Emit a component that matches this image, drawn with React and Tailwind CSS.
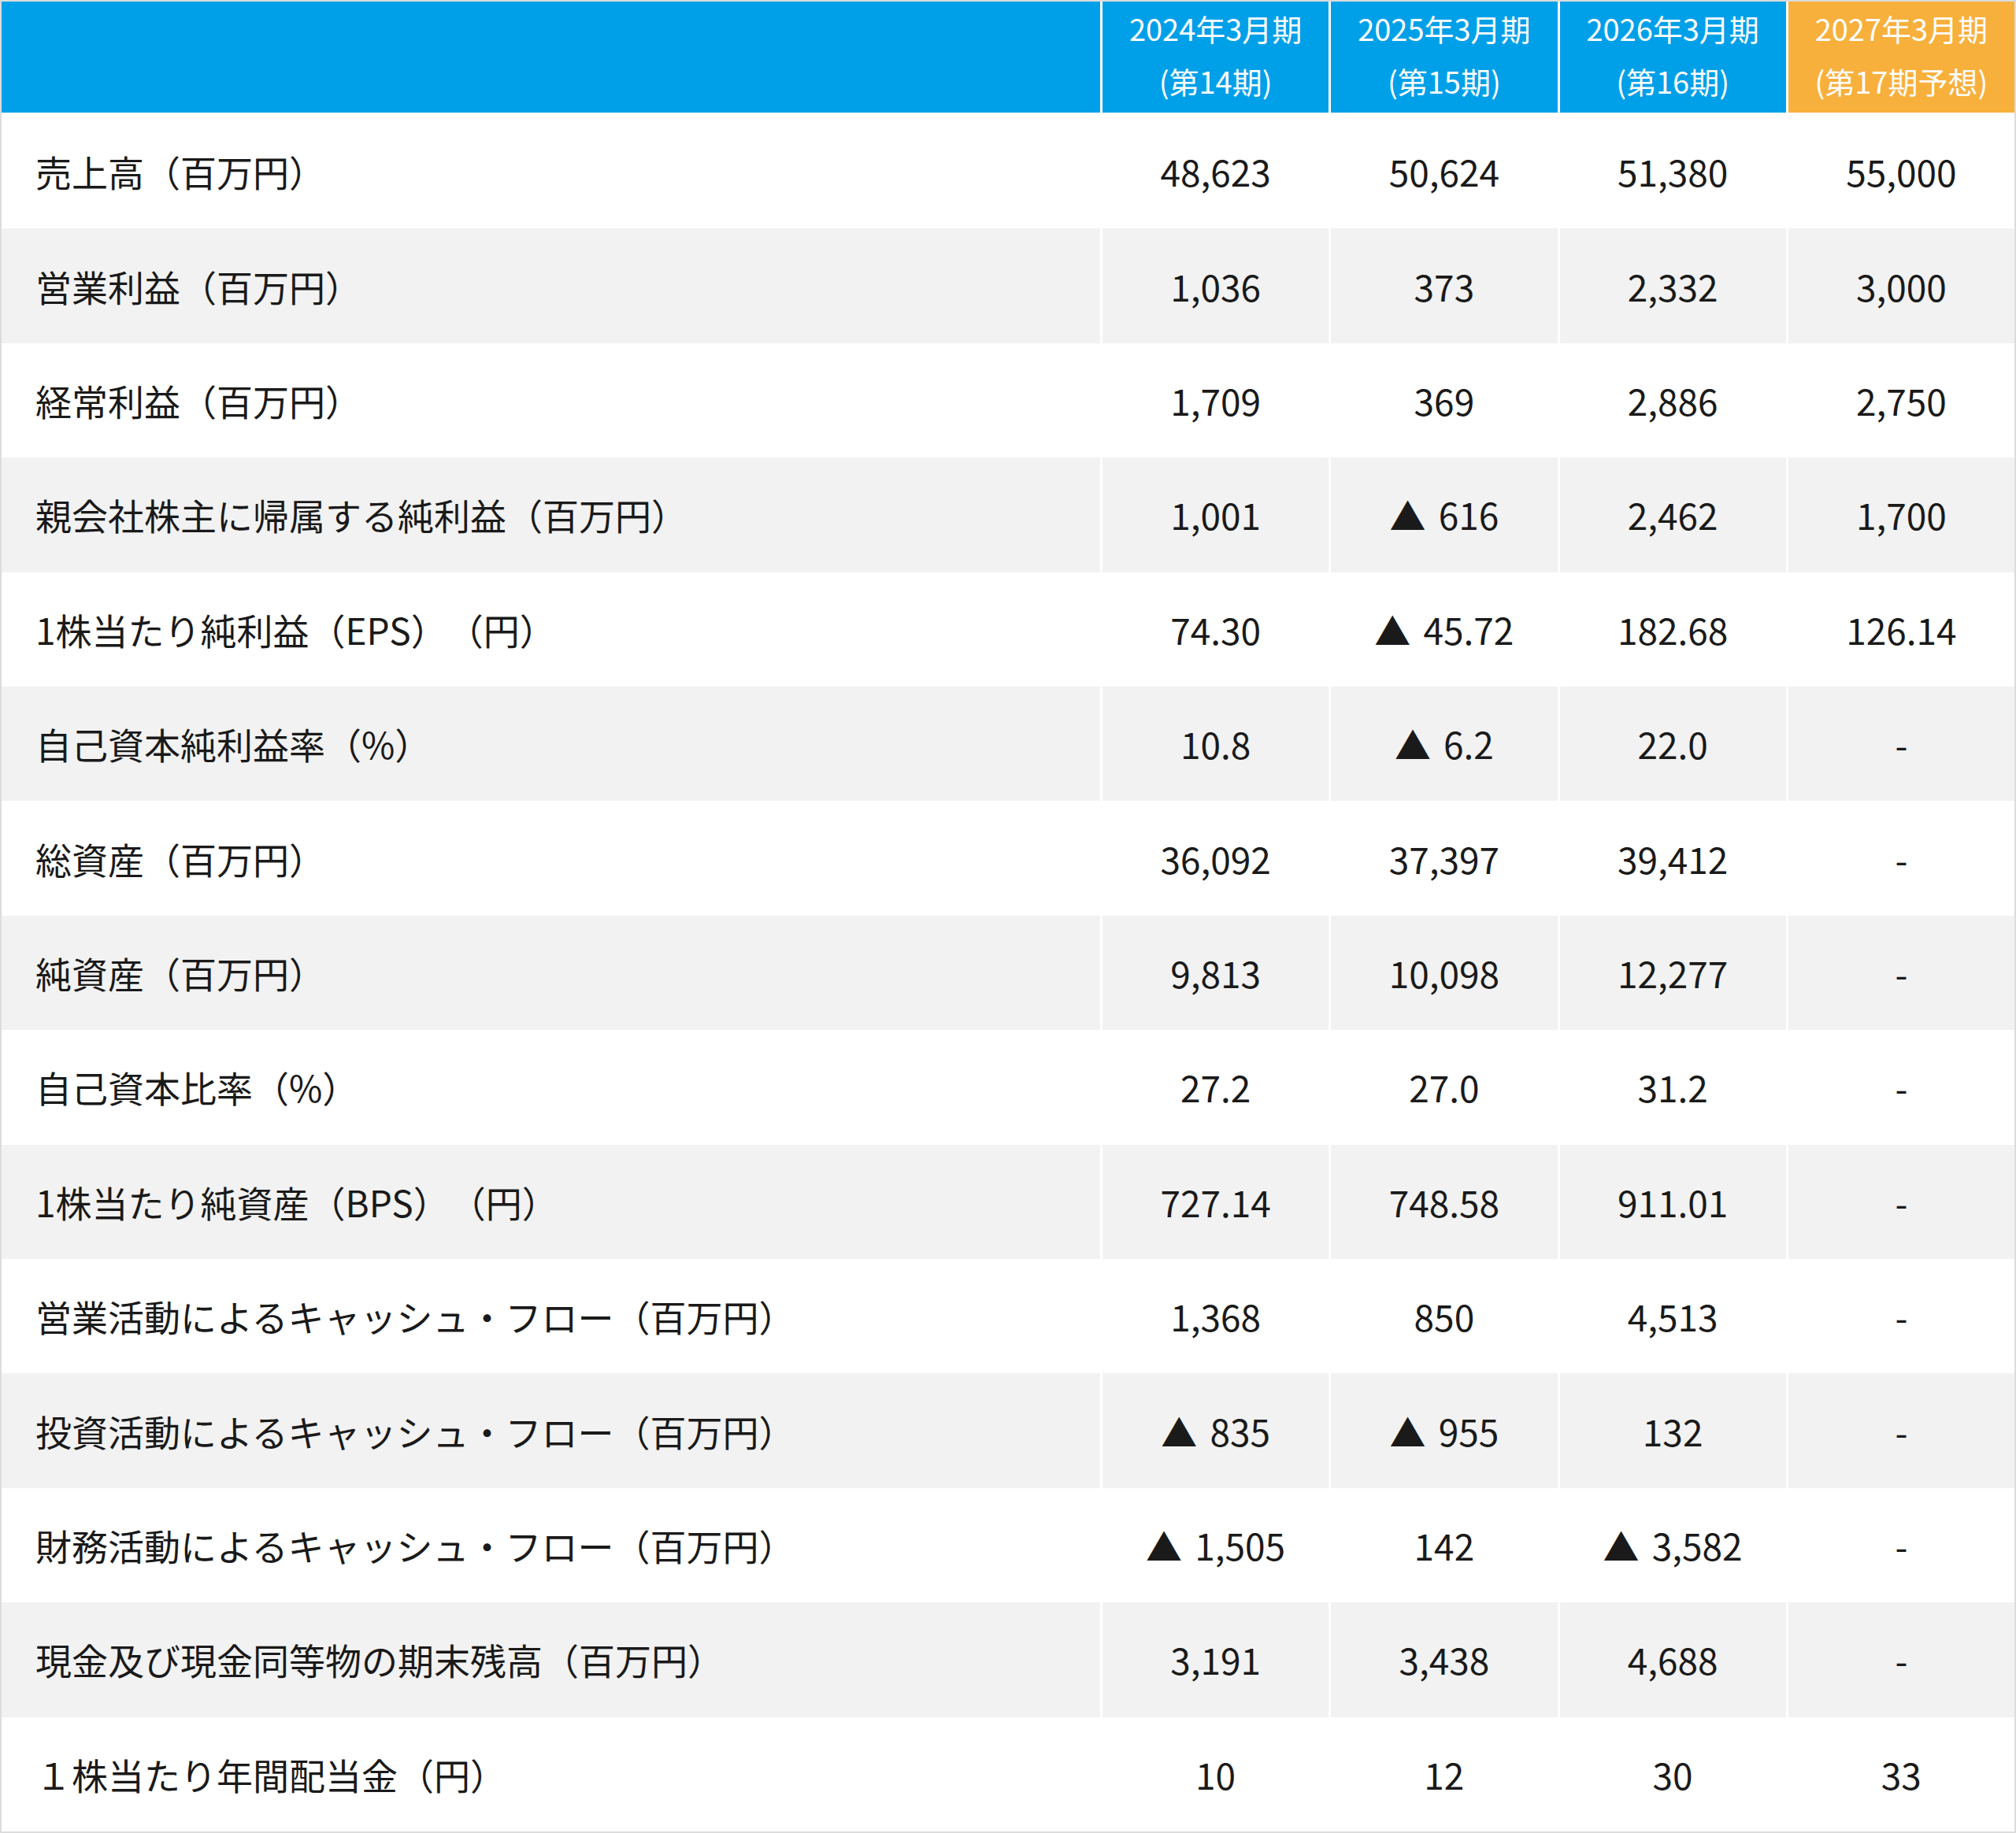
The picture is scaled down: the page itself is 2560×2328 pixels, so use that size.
import React from "react";

const rows = [
  ["売上高（百万円）", "48,623", "50,624", "51,380", "55,000"],
  ["営業利益（百万円）", "1,036", "373", "2,332", "3,000"],
  ["経常利益（百万円）", "1,709", "369", "2,886", "2,750"],
  ["親会社株主に帰属する純利益（百万円）", "1,001", "▲ 616", "2,462", "1,700"],
  ["1株当たり純利益（EPS）（円）", "74.30", "▲ 45.72", "182.68", "126.14"],
  ["自己資本純利益率（%）", "10.8", "▲ 6.2", "22.0", "-"],
  ["総資産（百万円）", "36,092", "37,397", "39,412", "-"],
  ["純資産（百万円）", "9,813", "10,098", "12,277", "-"],
  ["自己資本比率（%）", "27.2", "27.0", "31.2", "-"],
  ["1株当たり純資産（BPS）（円）", "727.14", "748.58", "911.01", "-"],
  ["営業活動によるキャッシュ・フロー（百万円）", "1,368", "850", "4,513", "-"],
  ["投資活動によるキャッシュ・フロー（百万円）", "▲ 835", "▲ 955", "132", "-"],
  ["財務活動によるキャッシュ・フロー（百万円）", "▲ 1,505", "142", "▲ 3,582", "-"],
  ["現金及び現金同等物の期末残高（百万円）", "3,191", "3,438", "4,688", "-"],
  ["１株当たり年間配当金（円）", "10", "12", "30", "33"],
];

const headers = [
  ["2024年3月期", "(第14期)", false],
  ["2025年3月期", "(第15期)", false],
  ["2026年3月期", "(第16期)", false],
  ["2027年3月期", "(第17期予想)", true],
];

function Value({ v }) {
  if (v.startsWith("▲ ")) {
    return (
      <span>
        <span className="mr-[0.35em]">▲</span>
        {v.slice(2)}
      </span>
    );
  }
  return <span>{v}</span>;
}

export default function App() {
  return (
    <div
      className="w-[2560px] h-[2328px] border-2 border-[#dcdcdc] bg-white flex flex-col text-[#1a1a1a] [text-spacing-trim:space-all]"
      style={{ fontFamily: '"Noto Sans CJK JP", "Noto Sans", sans-serif' }}
    >
      <div className="flex h-[143px] shrink-0 border-b-2 border-white">
        <div className="w-[1395px] shrink-0 bg-[#00a0e9]" />
        {headers.map(([a, b, orange]) => (
          <div
            key={a}
            className={
              "flex-1 border-l-[3px] border-white flex flex-col items-center justify-center pb-[8px] text-white text-[38px] leading-[67px] " +
              (orange ? "bg-[#f8b03c]" : "bg-[#00a0e9]")
            }
          >
            <span>{a}</span>
            <span>{b}</span>
          </div>
        ))}
      </div>
      {rows.map((r, i) => (
        <div
          key={r[0]}
          className={
            "flex flex-1 text-[46px] " + (i % 2 === 1 ? "bg-[#f2f2f2]" : "bg-white")
          }
        >
          <div className="w-[1395px] shrink-0 flex items-center pl-[43px]">{r[0]}</div>
          {r.slice(1).map((v, j) => (
            <div
              key={j}
              className="flex-1 border-l-[3px] border-white flex items-center justify-center"
            >
              <Value v={v} />
            </div>
          ))}
        </div>
      ))}
    </div>
  );
}
